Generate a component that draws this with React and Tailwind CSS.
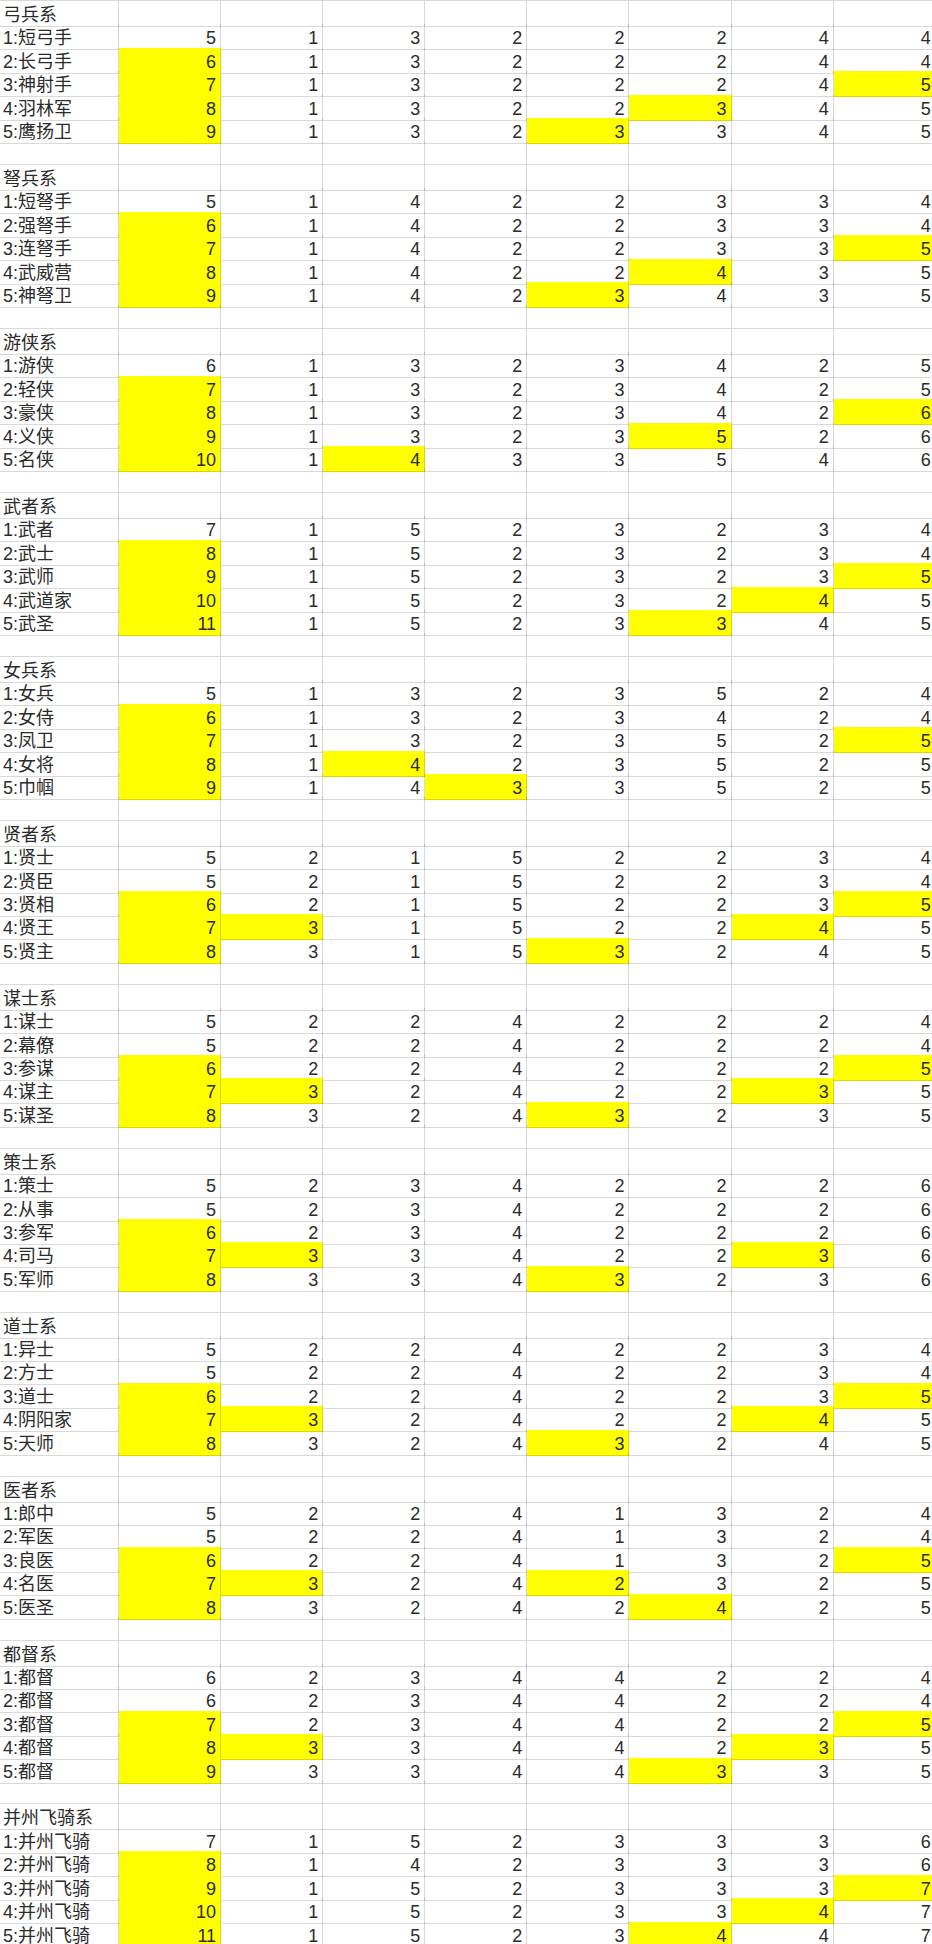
import React from 'react';

// each row: label, then 8 values; "*" after a value marks a yellow cell
const groups = [
  ['弓兵系', [
    ['1:短弓手', '5 1 3 2 2 2 4 4'],
    ['2:长弓手', '6* 1 3 2 2 2 4 4'],
    ['3:神射手', '7* 1 3 2 2 2 4 5*'],
    ['4:羽林军', '8* 1 3 2 2 3* 4 5'],
    ['5:鹰扬卫', '9* 1 3 2 3* 3 4 5'],
  ]],
  ['弩兵系', [
    ['1:短弩手', '5 1 4 2 2 3 3 4'],
    ['2:强弩手', '6* 1 4 2 2 3 3 4'],
    ['3:连弩手', '7* 1 4 2 2 3 3 5*'],
    ['4:武威营', '8* 1 4 2 2 4* 3 5'],
    ['5:神弩卫', '9* 1 4 2 3* 4 3 5'],
  ]],
  ['游侠系', [
    ['1:游侠', '6 1 3 2 3 4 2 5'],
    ['2:轻侠', '7* 1 3 2 3 4 2 5'],
    ['3:豪侠', '8* 1 3 2 3 4 2 6*'],
    ['4:义侠', '9* 1 3 2 3 5* 2 6'],
    ['5:名侠', '10* 1 4* 3 3 5 4 6'],
  ]],
  ['武者系', [
    ['1:武者', '7 1 5 2 3 2 3 4'],
    ['2:武士', '8* 1 5 2 3 2 3 4'],
    ['3:武师', '9* 1 5 2 3 2 3 5*'],
    ['4:武道家', '10* 1 5 2 3 2 4* 5'],
    ['5:武圣', '11* 1 5 2 3 3* 4 5'],
  ]],
  ['女兵系', [
    ['1:女兵', '5 1 3 2 3 5 2 4'],
    ['2:女侍', '6* 1 3 2 3 4 2 4'],
    ['3:凤卫', '7* 1 3 2 3 5 2 5*'],
    ['4:女将', '8* 1 4* 2 3 5 2 5'],
    ['5:巾帼', '9* 1 4 3* 3 5 2 5'],
  ]],
  ['贤者系', [
    ['1:贤士', '5 2 1 5 2 2 3 4'],
    ['2:贤臣', '5 2 1 5 2 2 3 4'],
    ['3:贤相', '6* 2 1 5 2 2 3 5*'],
    ['4:贤王', '7* 3* 1 5 2 2 4* 5'],
    ['5:贤主', '8* 3 1 5 3* 2 4 5'],
  ]],
  ['谋士系', [
    ['1:谋士', '5 2 2 4 2 2 2 4'],
    ['2:幕僚', '5 2 2 4 2 2 2 4'],
    ['3:参谋', '6* 2 2 4 2 2 2 5*'],
    ['4:谋主', '7* 3* 2 4 2 2 3* 5'],
    ['5:谋圣', '8* 3 2 4 3* 2 3 5'],
  ]],
  ['策士系', [
    ['1:策士', '5 2 3 4 2 2 2 6'],
    ['2:从事', '5 2 3 4 2 2 2 6'],
    ['3:参军', '6* 2 3 4 2 2 2 6'],
    ['4:司马', '7* 3* 3 4 2 2 3* 6'],
    ['5:军师', '8* 3 3 4 3* 2 3 6'],
  ]],
  ['道士系', [
    ['1:异士', '5 2 2 4 2 2 3 4'],
    ['2:方士', '5 2 2 4 2 2 3 4'],
    ['3:道士', '6* 2 2 4 2 2 3 5*'],
    ['4:阴阳家', '7* 3* 2 4 2 2 4* 5'],
    ['5:天师', '8* 3 2 4 3* 2 4 5'],
  ]],
  ['医者系', [
    ['1:郎中', '5 2 2 4 1 3 2 4'],
    ['2:军医', '5 2 2 4 1 3 2 4'],
    ['3:良医', '6* 2 2 4 1 3 2 5*'],
    ['4:名医', '7* 3* 2 4 2* 3 2 5'],
    ['5:医圣', '8* 3 2 4 2 4* 2 5'],
  ]],
  ['都督系', [
    ['1:都督', '6 2 3 4 4 2 2 4'],
    ['2:都督', '6 2 3 4 4 2 2 4'],
    ['3:都督', '7* 2 3 4 4 2 2 5*'],
    ['4:都督', '8* 3* 3 4 4 2 3* 5'],
    ['5:都督', '9* 3 3 4 4 3* 3 5'],
  ]],
  ['并州飞骑系', [
    ['1:并州飞骑', '7 1 5 2 3 3 3 6'],
    ['2:并州飞骑', '8* 1 4 2 3 3 3 6'],
    ['3:并州飞骑', '9* 1 5 2 3 3 3 7*'],
    ['4:并州飞骑', '10* 1 5 2 3 3 4* 7'],
    ['5:并州飞骑', '11* 1 5 2 3 4* 4 7'],
  ]],
];

const empty = Array(8).fill('');

function Row({ label, values }) {
  return (
    <div className="grid h-[23.43px] grid-cols-[119px_repeat(8,102.1px)]">
      <div className="h-full overflow-visible whitespace-nowrap border-r border-b border-black/15 pl-[3px] pt-[3px] leading-[22px]">
        {label}
      </div>
      {values.map((v, i) => {
        const hi = v.endsWith('*');
        return (
          <div
            key={i}
            className={`h-full border-r border-b border-black/15 pr-[4px] pt-[3px] text-right leading-[22px] ${hi ? 'bg-[#ffff00]' : ''}`}
          >
            {v.replace('*', '')}
          </div>
        );
      })}
    </div>
  );
}

export default function App() {
  return (
    <div className="h-[1944px] w-[932px] overflow-hidden border-t border-black/15 bg-white text-[18px] text-[#2b2b2b] [font-family:'Liberation_Sans','Noto_Sans_CJK_SC',sans-serif]">
      {groups.map(([title, rows], g) => (
        <div key={title}>
          <Row label={title} values={empty} />
          {rows.map(([label, vals]) => (
            <Row key={label + g} label={label} values={vals.split(' ')} />
          ))}
          <Row label="" values={empty} />
        </div>
      ))}
    </div>
  );
}
